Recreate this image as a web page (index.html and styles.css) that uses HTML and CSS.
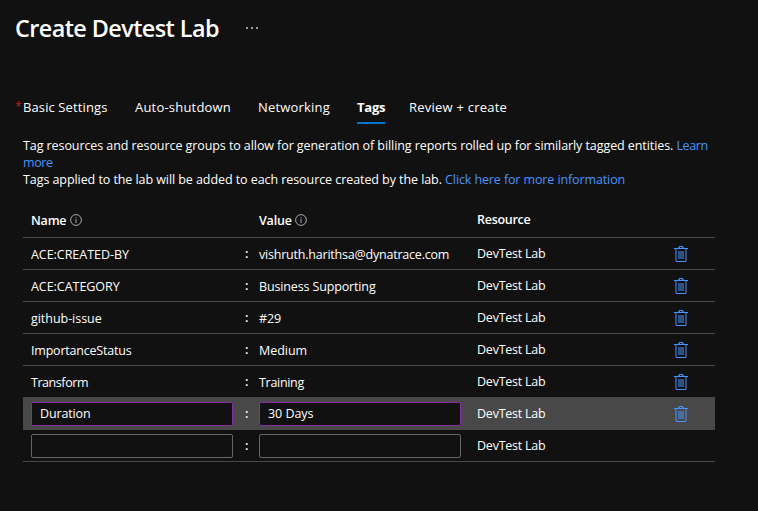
FILE: index.html
```
<!DOCTYPE html>
<html lang="en">
<head>
<meta charset="utf-8">
<title>Create Devtest Lab</title>
<link rel="stylesheet" href="styles.css">
</head>
<body>
<svg class="defs" aria-hidden="true">
  <symbol id="trash" viewBox="0 0 14 16">
    <g fill="currentColor">
      <path opacity=".5" d="M1 3h2v12h-2zM11 3h2v12h-2zM4 5h6v8h-6z"/>
      <path d="M5 0h4v1h-4zM0 2h14v1h-14zM2 15h10v1h-10z"/>
      <path opacity=".75" d="M4 1h2v1h-2zM8 1h2v1h-2z"/>
    </g>
  </symbol>
  <symbol id="info" viewBox="0 0 12 12">
    <circle cx="6" cy="6" r="5.4" fill="none" stroke="#aaa" stroke-width="1"/>
    <path d="M5.5 3h1v1h-1zM5.5 5h1v4h-1z" fill="#aaa"/>
  </symbol>
</svg>
<header class="head">
  <h1>Create Devtest Lab</h1>
  <div class="more" aria-label="More"><i></i><i></i><i></i></div>
</header>
<nav class="tabs">
  <a class="tab t1"><span class="req">*</span>Basic Settings</a>
  <a class="tab t2">Auto-shutdown</a>
  <a class="tab t3">Networking</a>
  <a class="tab t4 active">Tags</a>
  <a class="tab t5">Review + create</a>
</nav>
<main>
  <p class="p1">Tag resources and resource groups to allow for generation of billing reports rolled up for similarly tagged entities. <a class="learn">Learn<br>more</a></p>
  <p class="p2">Tags applied to the lab will be added to each resource created by the lab. <a class="click">Click here for more information</a></p>
  <div class="table">
    <div class="row th"><b class="label">Name<svg class="info"><use href="#info"/></svg></b><span></span><b class="label value">Value<svg class="info"><use href="#info"/></svg></b><b class="res">Resource</b></div>
    <div class="row"><span class="cell">ACE:CREATED-BY</span><span class="colon">:</span><span class="cell tight2">vishruth.harithsa@dynatrace.com</span><span class="res">DevTest Lab</span><svg class="trash"><use href="#trash"/></svg></div>
    <div class="row"><span class="cell">ACE:CATEGORY</span><span class="colon">:</span><span class="cell tight1">Business Supporting</span><span class="res">DevTest Lab</span><svg class="trash"><use href="#trash"/></svg></div>
    <div class="row"><span class="cell">github-issue</span><span class="colon">:</span><span class="cell tight1">#29</span><span class="res">DevTest Lab</span><svg class="trash"><use href="#trash"/></svg></div>
    <div class="row"><span class="cell tight2">ImportanceStatus</span><span class="colon">:</span><span class="cell">Medium</span><span class="res">DevTest Lab</span><svg class="trash"><use href="#trash"/></svg></div>
    <div class="row"><span class="cell tight4">Transform</span><span class="colon">:</span><span class="cell tight3">Training</span><span class="res">DevTest Lab</span><svg class="trash"><use href="#trash"/></svg></div>
    <div class="row edit selected"><div class="field tight1">Duration</div><span class="colon">:</span><div class="field">30 Days</div><span class="res">DevTest Lab</span><svg class="trash"><use href="#trash"/></svg></div>
    <div class="row edit"><div class="field"></div><span class="colon">:</span><div class="field"></div><span class="res">DevTest Lab</span></div>
  </div>
</main>
</body>
</html>
```
FILE: styles.css
```
* { box-sizing: border-box; }
body {
  margin: 0;
  height: 511px;
  overflow: hidden;
  background: #111;
  color: #fff;
  font: 12.5px/17px "Open Sans", "Liberation Sans", sans-serif;
  letter-spacing: -0.04px;
}
.defs { display: none; }
.head { display: flex; align-items: center; height: 56px; padding-left: 15px; }
h1 {
  margin: 0;
  width: 231px;
  font-size: 23.4px;
  line-height: 32px;
  font-weight: 600;
  letter-spacing: -0.57px;
  white-space: nowrap;
}
.more { display: flex; gap: 3px; }
.more i { width: 2px; height: 2px; background: #999; }
.tabs { display: flex; height: 69px; padding: 39px 0 0 15px; }
.tab { height: 29px; line-height: 25px; font-size: 13px; white-space: nowrap; }
.t1 { display: flex; width: 120px; letter-spacing: .11px; }
.t2 { width: 123px; letter-spacing: .2px; }
.t3 { width: 99px; letter-spacing: .19px; }
.t4 { width: 28px; margin-right: 24px; letter-spacing: -.2px; }
.t5 { letter-spacing: .23px; }
.active { font-weight: 700; border-bottom: 2px solid #0078d4; }
.req { width: 8px; color: #b3262b; font-size: 12px; line-height: 23px; }
main { padding: 12px 43px 0 23px; }
p { margin: 0; white-space: nowrap; }
p a { color: #4894fe; }
.p1 { letter-spacing: -.078px; }
.learn { letter-spacing: -.38px; }
.p2 { letter-spacing: -.07px; }
.click { letter-spacing: -.115px; }
.table { margin-top: 14px; }
.row {
  display: grid;
  grid-template-columns: 202px 26px 202px 16px 197px 14px;
  align-items: center;
  height: 32px;
  padding-left: 8px;
  border-bottom: 1px solid #484848;
  white-space: nowrap;
}
.row > * { grid-row: 1; }
.th { height: 36px; font-weight: 600; letter-spacing: -.2px; }
.th .res { letter-spacing: -.27px; }
.label { display: flex; align-items: center; gap: 4px; padding-top: 1px; font-weight: 600; }
.value { gap: 3px; }
.cell { padding-top: 2px; }
.info { width: 12px; height: 12px; }
.colon { padding-left: 12px; font-weight: 600; }
.res { grid-column: 5; letter-spacing: -.229px; font-weight: inherit; }
.trash { grid-column: 6; width: 14px; height: 16px; color: #4894fe; }
.tight1 { letter-spacing: -.14px; }
.tight2 { letter-spacing: -.21px; }
.tight3 { letter-spacing: -.3px; }
.tight4 { letter-spacing: -.44px; }
.field { height: 24px; border: 1px solid #666; border-radius: 2px; background: #111; padding-left: 8px; line-height: 21px; }
.selected { background: #484848; }
.selected .field { border-color: #8a2da5; }
```
